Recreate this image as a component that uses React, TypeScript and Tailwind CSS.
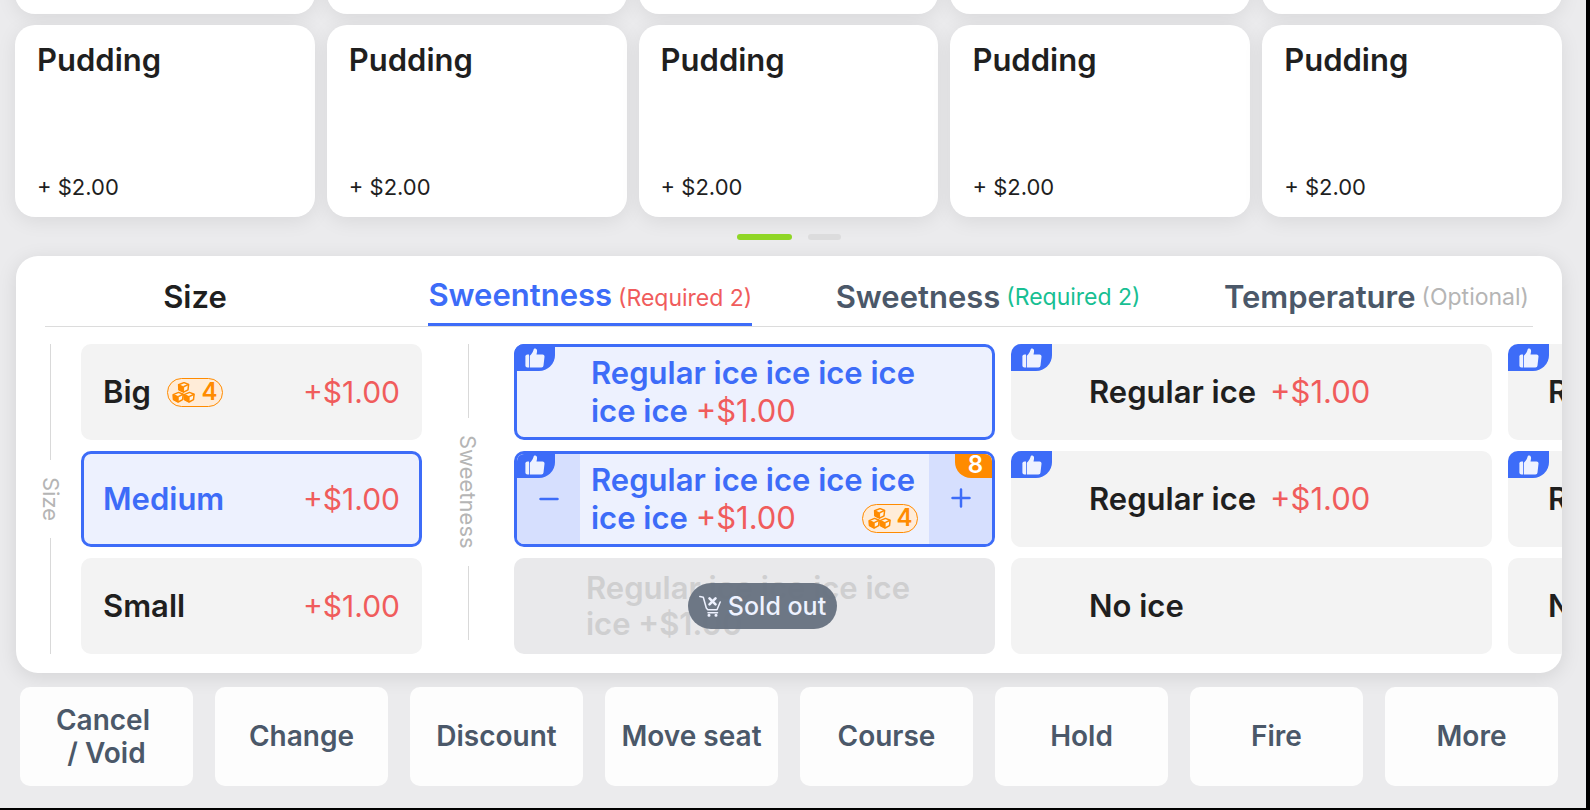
import { useState } from "react";
import { clsx } from "clsx";

const toppings = Array.from({ length: 10 }, (_, i) => ({ id: i, name: "Pudding", price: "+ $2.00" }));

const sizes = [
  { name: "Big", price: "+$1.00", stock: 4 },
  { name: "Medium", price: "+$1.00" },
  { name: "Small", price: "+$1.00" },
];

const tabs = [
  { id: "size", label: "Size", note: "", noteColor: "", color: "text-[#1f1f1f]" },
  { id: "sweentness", label: "Sweentness", note: "(Required 2)", noteColor: "text-[#f05c5c]", color: "text-[#4b5869]" },
  { id: "sweetness", label: "Sweetness", note: "(Required 2)", noteColor: "text-[#18bf93]", color: "text-[#4b5869]" },
  { id: "temperature", label: "Temperature", note: "(Optional)", noteColor: "text-[#b5b5b5]", color: "text-[#4b5869]" },
];

const actions = ["Cancel \n/ Void", "Change", "Discount", "Move seat", "Course", "Hold", "Fire", "More"];

function ThumbIcon() {
  return (
    <svg viewBox="0 0 20 20" className="h-5 w-5" fill="#eef2ff" aria-hidden="true">
      <path d="M2.500 6.600H4V19.400H2.500C1.300 19.400.4 18.600.4 17.400V8.600C.4 7.400 1.300 6.600 2.500 6.600Z" />
      <path d="M4.800 7.800C6.600 6 8 3.900 8.500 1.900C8.800.7 9.600.3 10.400.5C11.900.9 12.300 2.500 12 3.900L11.500 6.500H17.500C18.900 6.500 19.700 7.500 19.500 8.800L18.500 17.400C18.300 18.700 17.600 19.400 16.400 19.400H4.800Z" />
    </svg>
  );
}

function CubesIcon() {
  return (
    <svg viewBox="0 0 23 21" className="h-[21px] w-[23px]" stroke="#ff8b00" strokeLinejoin="round" aria-hidden="true">
      {["translate(6 0)", "translate(.6 9.800)", "translate(11.500 9.800)"].map((t) => (
        <g key={t} transform={t}>
          <path d="M.6 2.800L6 .6L10.600 2.400L10 7.800L5.600 10.200L.9 7.800Z" fill="#fff3e5" strokeWidth="1.500" />
          <path d="M.6 2.800L5.600 4.800V10.200L.9 7.800Z" fill="#ff8b00" strokeWidth="1" />
          <path d="M5.600 4.800L10.600 2.400" fill="none" strokeWidth="1.500" />
        </g>
      ))}
    </svg>
  );
}

function SoldOutIcon() {
  return (
    <svg viewBox="0 0 22 22" className="h-[22px] w-[22px]" fill="none" stroke="#eef2ff" strokeWidth="1.500" strokeLinecap="round" strokeLinejoin="round" aria-hidden="true">
      <path d="M.8 1.500L4.300 2.200L7.300 13L8.800 14.800H18L21.200 7" />
      <path d="M9 17.800H18.500" />
      <path d="M10.500 3.300L16.500 9.300M16.500 3.300L10.500 9.300" strokeWidth="2.600" />
      <circle cx="10" cy="20.300" r=".8" />
      <circle cx="17" cy="20.300" r=".8" />
    </svg>
  );
}

function StockBadge({ count }: { count: number }) {
  return (
    <span className="flex h-[29px] w-14 items-center justify-center gap-1.5 rounded-full border border-[#ff8b00] bg-[#ffecd8] text-2xl leading-none font-semibold text-[#ff8b00]">
      <CubesIcon />
      {count}
    </span>
  );
}

function RecommendTag() {
  return (
    <span className="absolute top-0 left-0 flex h-[27px] w-[41px] items-center justify-center rounded-tl-[10px] rounded-br-2xl bg-[#3d6cf8]">
      <ThumbIcon />
    </span>
  );
}

function SideLabel({ text, className }: { text: string; className: string }) {
  return (
    <div className={clsx("flex shrink-0 flex-col items-center gap-[17px]", className)}>
      <span className="w-px flex-1 bg-[#d9d9d9]" />
      <span className="text-[22px] leading-6 text-[#b5b5b5] [writing-mode:vertical-rl]">{text}</span>
      <span className="w-px flex-1 bg-[#d9d9d9]" />
    </div>
  );
}

const Price = () => <span className="font-normal text-[#f05c5c]">+$1.00</span>;

function PlainOption({ name, price, recommended, className }: { name: string; price?: boolean; recommended?: boolean; className: string }) {
  return (
    <button className={clsx("relative flex items-center gap-3.5 rounded-[10px] bg-[#f3f3f3] text-[31px] font-semibold whitespace-nowrap text-[#1f1f1f]", className)}>
      {recommended && <RecommendTag />}
      {name}
      {price && <Price />}
    </button>
  );
}

export default function App() {
  const [activeTab, setActiveTab] = useState("sweentness");
  const [size, setSize] = useState("Medium");

  return (
    <div className="overflow-hidden bg-black pr-1 pb-0.5 font-[Inter,sans-serif]">
      <main className="overflow-hidden bg-[#ebebed] pr-6 pb-[22px] pl-[15px]">
        {/* toppings, scrolled down to the second row */}
        <section className="-mt-[178px] grid grid-cols-5 gap-x-3 gap-y-[11px]">
          {toppings.map((item) => (
            <button
              key={item.id}
              className="flex h-48 flex-col items-start justify-between rounded-[20px] bg-white px-[22px] pt-[15px] pb-3.5 text-left text-[#1f1f1f] shadow-[0_4px_20px_rgba(0,0,0,0.08)]"
            >
              <span className="text-[31px] leading-10 font-semibold">{item.name}</span>
              <span className="text-[22px] leading-8">{item.price}</span>
            </button>
          ))}
        </section>

        <div className="flex h-[39px] items-center justify-center gap-4">
          <span className="h-1.5 w-[55px] rounded-full bg-[#8fd626]" />
          <span className="h-1.5 w-[33px] rounded-full bg-[#dcdcdd]" />
        </div>

        <section className="ml-px overflow-hidden rounded-[22px] bg-white shadow-[0_4px_20px_rgba(0,0,0,0.1)]">
          <nav className="mr-[29px] ml-[29px] flex h-[71px] justify-between border-b border-[#dcdcdc] pr-1">
            {tabs.map((tab) => {
              const active = tab.id === activeTab;
              return (
                <button
                  key={tab.id}
                  onClick={() => setActiveTab(tab.id)}
                  className={clsx(
                    "flex items-center justify-center gap-1.5 pt-3 text-[31px] font-semibold whitespace-nowrap",
                    tab.id === "size" && "w-[300px]",
                    active ? "border-b-3 border-[#3d6cf8] text-[#3d6cf8]" : tab.color
                  )}
                >
                  {tab.label}
                  {tab.note && <span className={clsx("text-[23px] font-normal", active && "pt-1.5", tab.noteColor)}>{tab.note}</span>}
                </button>
              );
            })}
          </nav>

          <div className="flex pt-[17px] pb-[19px]">
            <SideLabel text="Size" className="ml-1 w-[61px]" />
            <div className="flex w-[341px] shrink-0 flex-col gap-[11px]">
              {sizes.map((s) => (
                <button
                  key={s.name}
                  onClick={() => setSize(s.name)}
                  className={clsx(
                    "flex h-24 items-center justify-between rounded-[10px] border-3 px-[19px] text-[31px] font-semibold",
                    s.name === size ? "border-[#3d6cf8] bg-[#edf1fe] text-[#3d6cf8]" : "border-[#f3f3f3] bg-[#f3f3f3] text-[#1f1f1f]"
                  )}
                >
                  <span className="flex items-center gap-4">
                    {s.name}
                    {s.stock && <StockBadge count={s.stock} />}
                  </span>
                  <span className="text-3xl font-normal text-[#f05c5c]">{s.price}</span>
                </button>
              ))}
            </div>

            <SideLabel text="Sweetness" className="w-[92px] pb-3.5" />
            <div className="grid min-w-0 flex-1 auto-cols-[481px] grid-flow-col grid-rows-[96px_96px_96px] gap-x-4 gap-y-[11px] overflow-hidden">
              <button className="relative rounded-[10px] border-3 border-[#3d6cf8] bg-[#edf1fe] pr-16 pl-[74px] text-left text-[31px] leading-[38px] font-semibold text-[#3d6cf8]">
                <span className="absolute -top-[3px] -left-[3px]">
                  <RecommendTag />
                </span>
                Regular ice ice ice ice ice ice <Price />
              </button>

              <div className="relative flex overflow-hidden rounded-[10px] border-3 border-[#3d6cf8] bg-[#edf1fe] text-[31px] leading-[38px] font-semibold text-[#3d6cf8]">
                <span className="absolute -top-[3px] -left-[3px]">
                  <RecommendTag />
                </span>
                <button aria-label="Remove one" className="flex w-[63px] items-center justify-center bg-[#d6dffe]">
                  <svg viewBox="0 0 20 20" className="h-5 w-5" stroke="#3d6cf8" strokeWidth="2.500" strokeLinecap="round">
                    <path d="M1.500 10H18.500" />
                  </svg>
                </button>
                <span className="flex-1 pt-[7px] pl-[11px] whitespace-nowrap">
                  Regular ice ice ice ice
                  <span className="flex items-center justify-between pr-[11px]">
                    <span>
                      ice ice <Price />
                    </span>
                    <StockBadge count={4} />
                  </span>
                </span>
                <button aria-label="Add one" className="flex w-[63px] items-center justify-center bg-[#d6dffe] pb-0.5">
                  <svg viewBox="0 0 20 20" className="h-5 w-5" stroke="#3d6cf8" strokeWidth="2.500" strokeLinecap="round">
                    <path d="M1.500 10H18.500M10 1.500V18.500" />
                  </svg>
                </button>
                <span className="absolute top-0 right-0 flex h-6 w-[37px] items-center justify-center rounded-bl-2xl bg-[#ff8b00] pb-0.5 pl-1 text-2xl font-semibold text-white">
                  8
                </span>
              </div>

              <button disabled className="relative rounded-[10px] bg-[#e9e9eb] pr-16 pl-[72px] text-left text-[31px] leading-9 font-semibold text-[#cfcfd0]">
                Regular ice ice ice ice <br />
                ice +$1.00
                <span className="absolute inset-0 flex items-center justify-center pl-4">
                  <span className="flex h-[46px] items-center gap-[7px] rounded-full bg-[#667180]/95 px-[11px] text-[25px] font-medium text-[#eef2ff]">
                    <SoldOutIcon />
                    Sold out
                  </span>
                </span>
              </button>

              <PlainOption name="Regular ice" price recommended className="pl-[78px]" />
              <PlainOption name="Regular ice" price recommended className="pl-[78px]" />
              <PlainOption name="No ice" className="pl-[78px]" />
              <PlainOption name="Regular ice" price recommended className="pl-10" />
              <PlainOption name="Regular ice" price recommended className="pl-10" />
              <PlainOption name="No ice" className="pl-10" />
            </div>
          </div>
        </section>

        <footer className="mt-3.5 mr-1 ml-[5px] grid grid-cols-8 gap-[22px]">
          {actions.map((label) => (
            <button
              key={label}
              className="flex h-[99px] items-center justify-center rounded-[10px] bg-[#fdfdfd] text-[28px] leading-[33px] font-semibold whitespace-pre text-[#4b5869]"
            >
              {label}
            </button>
          ))}
        </footer>
      </main>
    </div>
  );
}
